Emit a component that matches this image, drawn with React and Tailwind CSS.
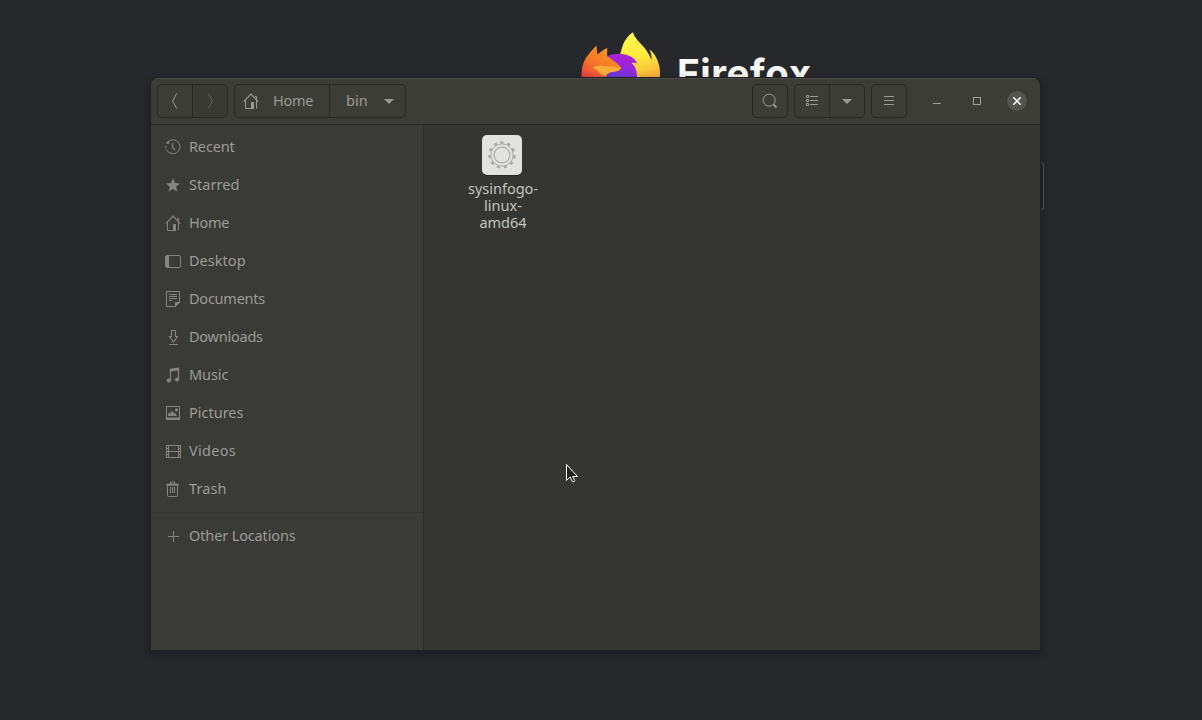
import React from "react";

const ICONS = {
  recent: (
    <>
      <path d="M2.800 3A7 7 0 1 1 1.500 10.500" />
      <path d="M.700 7v1.800M7.500 4v4.500l2.500 2.500" strokeWidth="1.200" />
      <path d="M.500 4.500L3.500 1.500l1 3.500z" fill="currentColor" stroke="none" />
    </>
  ),
  star: <path stroke="none" fill="currentColor" d="M8 1.300l2 4.800 5 .4-3.900 3.200 1.300 5L8 12l-4.400 2.700 1.300-5L1 6.500l5-.4z" />,
  home: (
    <>
      <path d="M.700 8.700L8 1.200l7.300 7.500" strokeWidth="1.200" />
      <path d="M2.500 7.200v8.300h6M13.500 7.200v8.300M13.500 6V3.500h-1.500" />
      <path d="M8 9h3v7H8z" fill="currentColor" stroke="none" />
    </>
  ),
  desktop: (
    <>
      <rect x=".5" y="2.500" width="15" height="12" rx="1.500" />
      <path d="M1 3h3v11H1z" fill="currentColor" stroke="none" />
    </>
  ),
  documents: (
    <>
      <path d="M1.500.5h13v11l-4 4h-9zM4 3.500h8M4 5.500h8M4 7.500h8M4 9.500h3" />
      <path d="M10 11h5l-5 5z" fill="currentColor" stroke="none" />
    </>
  ),
  downloads: <path d="M6.500 1.500h4v6h2L8.500 13l-4-5.500h2zM4 15.500h9" strokeWidth="1.100" />,
  music: (
    <>
      <path d="M5.500 13.500V2.500M13.500 12.500V1" strokeWidth="1.200" />
      <path d="M5 1.800L14 .5v3L5 4.600z" fill="currentColor" stroke="none" />
      <circle cx="3.800" cy="13.600" r="2.100" fill="currentColor" stroke="none" />
      <circle cx="12" cy="12.600" r="2.100" fill="currentColor" stroke="none" />
    </>
  ),
  pictures: (
    <>
      <path d="M1.500 1.500h13v13h-13z" />
      <path d="M1 12.500h14V15H1zM3 11V9.500L4.500 7l1 1.600L7 5.500l2 3 1-.8 2 3.300z" fill="currentColor" stroke="none" />
      <circle cx="11.500" cy="4.800" r="1.600" fill="currentColor" stroke="none" />
    </>
  ),
  videos: (
    <>
      <path d="M1.500 2v13M15.500 2v13M3.500 2v13M13.500 2v13M3.500 2.500h10M3.500 8.500h10M3.500 14.500h10" />
      <path d="M1 2.500h2.500M1 5.500h2.500M1 8.500h2.500M1 11.500h2.500M1 14.500h2.500M13.500 2.500H16M13.500 5.500H16M13.500 8.500H16M13.500 11.500H16M13.500 14.500H16" />
    </>
  ),
  trash: (
    <>
      <path d="M2.500 5v9.500q0 1 1 1h8q1 0 1-1V5M5.500 6v6M7.500 6v6M9.500 6v6M5.500 3V1h4v2" />
      <path d="M1 4.800V3.800Q2 2.500 3.500 2.500h8q1.500 0 2.500 1.300v1z" fill="currentColor" stroke="none" />
    </>
  ),
  plus: <path d="M8.500 3v11M3 8.500h11" />,
  back: <path d="M9.700 .5L5.700 8l4 7.500" />,
  forward: <path d="M6.300 .5L10.300 8l-4 7.500" />,
  down: <path d="M3 6h10l-5 5z" fill="currentColor" stroke="none" />,
  search: (
    <>
      <circle cx="7.200" cy="7.200" r="6" />
      <path d="M11.500 11.500l3 3" strokeWidth="1.800" />
    </>
  ),
  list: <path d="M2.500 2.500h2v2h-2zM2.500 6.500h2v2h-2zM2.500 10.500h2v2h-2zM6 3.500h8M6 7.500h8M6 11.500h8" />,
  menu: <path d="M3 3.500h10M3 7.500h10M3 11.500h10" />,
};

function Icon({ name }) {
  return (
    <svg viewBox="0 0 16 16" className="size-4 shrink-0 overflow-visible" fill="none" stroke="currentColor" strokeWidth="1">
      {ICONS[name]}
    </svg>
  );
}

const PLACES = [
  ["recent", "Recent", "tracking-[-0.15px]"],
  ["star", "Starred", "tracking-[0.05px]"],
  ["home", "Home", "tracking-[-0.25px]"],
  ["desktop", "Desktop", "tracking-[0.03px]"],
  ["documents", "Documents", "tracking-[-0.24px]"],
  ["downloads", "Downloads", "tracking-[-0.24px]"],
  ["music", "Music", "tracking-[-0.1px]"],
  ["pictures", "Pictures", ""],
  ["videos", "Videos", "tracking-[0.3px]"],
  ["trash", "Trash", "tracking-[0.1px]"],
];

function Place({ icon, label, tracking }) {
  return (
    <li className="flex h-[38px] items-center gap-2 pb-px pl-[14px] text-[#85857f]">
      <Icon name={icon} />
      <span className={"text-[#9c9c98] " + tracking}>{label}</span>
    </li>
  );
}

function FirefoxLogo() {
  return (
    <svg viewBox="0 0 80 80" className="h-20 w-20 shrink-0">
      <defs>
        <linearGradient id="flame" gradientUnits="userSpaceOnUse" x1="50" y1="0" x2="66" y2="58">
          <stop offset="0" stopColor="#fff651" />
          <stop offset=".4" stopColor="#ffec40" />
          <stop offset=".7" stopColor="#f9c43b" />
          <stop offset="1" stopColor="#f58a35" />
        </linearGradient>
        <linearGradient id="fox" gradientUnits="userSpaceOnUse" x1="24" y1="18" x2="4" y2="50">
          <stop offset="0" stopColor="#f79322" />
          <stop offset=".5" stopColor="#f5702a" />
          <stop offset="1" stopColor="#e5344a" />
        </linearGradient>
        <linearGradient id="globe" gradientUnits="userSpaceOnUse" x1="42" y1="24" x2="34" y2="50">
          <stop offset="0" stopColor="#ac20d6" />
          <stop offset=".45" stopColor="#9029dc" />
          <stop offset="1" stopColor="#5b45dc" />
        </linearGradient>
      </defs>
      <path fill="url(#flame)" d="M52 .3c1.500 6 7 10 11 15 3 4 6 8 7.500 13 .3-4-.5-8-2.200-11 5 3.500 8 9.500 9.500 15 1 3 1.200 7 1.200 10 0 20-16 37-37 37L39 24c.3-3 1.300-6 2.500-9.500C43 9 47 3.500 52 .3z" />
      <path fill="url(#globe)" d="M25 25c5-3 13-4 19-2.500 5 1 8 3 10 5.500l2.500 3.500c-2-.8-4-.8-6-.5 3 2 5 6 5.500 12 0 8-6 16-14 16S22 51 22 42z" />
      <path fill="url(#fox)" d="M.5 43c0-9 3-16 7-20.500 3-4 5.500-6.500 8-9 .2 3 .5 6 .8 9 3-2.500 6-5 10-6.500-.3 3-.3 6 .2 8.500 3 2 6 4 9 6.500 2.500 2 4.500 3.500 4.500 5-1 3-5 3.500-9 4-3 .5-5 2-6 5-2 8 6 22 12 22v10C15 79 .5 65 .5 43z" />
      <path fill="#f8ad38" d="M11.500 35.500c3-1.500 7-2.500 11-1.500 4 .6 6 0 9 .6 3 .4 6 1 8.500 1.400-1 3-5 3.500-9 4-3 .4-5 1.500-6 3.500-3 .2-6-.5-7-3.500-2-2-4-3-6.500-4.500z" />
    </svg>
  );
}

export default function App() {
  return (
    <div className="relative h-[720px] w-[1202px] overflow-hidden bg-[#27282c] [font-family:'Noto_Sans',sans-serif] text-[14.500px]">
      <div className="absolute left-[581px] top-8 flex gap-4">
        <FirefoxLogo />
        <span className="pt-[17px] [font-family:Inter,sans-serif] text-[38.500px] font-bold leading-[48px] tracking-[0.6px] text-[#f8f8f5]">Firefox</span>
      </div>
      <div className="absolute left-[1030px] top-[162px] h-12 w-[14px] rounded-[3px] border border-[#56575a]" />

      <div className="absolute left-[151px] top-[78px] flex h-[572px] w-[889px] flex-col overflow-hidden rounded-t-lg bg-[#353631] shadow-[0_0_0_1px_#202120,0_3px_9px_1px_rgba(0,0,0,0.35)]">
        <header className="flex h-[47px] shrink-0 items-center border-b border-t border-b-[#242522] border-t-[#4b4c47] bg-[#3d3d38] pb-px pl-1.5 pr-[13px] text-[#999995]">
          <div className="flex h-[34px] w-[71px] rounded-[5px] border border-[#272824]">
            <button className="flex w-[35px] items-center justify-center border-r border-[#272824]"><Icon name="back" /></button>
            <button className="flex flex-1 items-center justify-center rounded-r bg-[#393934] text-[#65665f]"><Icon name="forward" /></button>
          </div>
          <div className="ml-1.5 flex h-[34px] w-[172px] rounded-[5px] border border-[#272824]">
            <button className="flex w-[95px] items-center gap-[14px] border-r border-[#272824] pl-2">
              <Icon name="home" />
              <span className="tracking-[-0.25px]">Home</span>
            </button>
            <button className="flex flex-1 items-center justify-between pl-4 pr-2">
              <span>bin</span>
              <Icon name="down" />
            </button>
          </div>
          <button className="ml-auto flex h-[34px] w-9 items-center justify-center rounded-[5px] border border-[#272824]"><Icon name="search" /></button>
          <div className="ml-1.5 flex h-[34px] w-[71px] rounded-[5px] border border-[#272824]">
            <button className="flex w-[35px] items-center justify-center border-r border-[#272824]"><Icon name="list" /></button>
            <button className="flex flex-1 items-center justify-center"><Icon name="down" /></button>
          </div>
          <button className="ml-1.5 flex h-[34px] w-9 items-center justify-center rounded-[5px] border border-[#272824]"><Icon name="menu" /></button>
          <div className="ml-[26px] flex items-center">
            <span className="mt-1 h-px w-2 bg-[#a0a09b]" />
            <span className="ml-8 size-2 border border-[#a0a09b]" />
            <span className="ml-[26px] flex size-5 items-center justify-center rounded-full bg-[#555550]">
              <svg viewBox="0 0 8 8" className="size-2" stroke="#fff" strokeWidth="1.500"><path d="M.3.3l7.400 7.400M7.700.3L.3 7.700" /></svg>
            </span>
          </div>
        </header>
        <div className="flex flex-1">
          <aside className="w-[273px] shrink-0 border-r border-[#2c2d29] bg-[#3a3a36] pt-[3px]">
            <ul>
              {PLACES.map(([icon, label, tracking]) => <Place key={label} icon={icon} label={label} tracking={tracking} />)}
            </ul>
            <ul className="mt-1 border-t border-[#343530] pt-1">
              <Place icon="plus" label="Other Locations" tracking="tracking-[-0.13px]" />
            </ul>
          </aside>
          <main className="pl-[34px] pt-2.5">
            <figure className="flex w-[90px] flex-col items-center">
              <svg viewBox="0 0 40 40" className="mr-0.5 size-10 overflow-visible">
                <rect y="1" width="40" height="40" rx="5" fill="#272824" />
                <rect width="40" height="40" rx="5" fill="#e2e2df" />
                <g fill="none" stroke="#a9a9a6">
                  <circle cx="20" cy="20" r="12.500" strokeWidth="2.400" strokeDasharray="3.200 3.940" transform="rotate(-98 20 20)" />
                  <circle cx="20" cy="20" r="11.200" strokeWidth="1" />
                  <circle cx="20" cy="20" r="7.900" strokeWidth="1.100" />
                </g>
              </svg>
              <figcaption className="pt-[5px] text-center leading-[17px] text-[#c3c3bf]">sysinfogo-<br />linux-<br />amd64</figcaption>
            </figure>
          </main>
        </div>
      </div>

      <svg viewBox="0 0 12 20" className="absolute left-[566px] top-[463px] h-5 w-3" fill="#20211e" stroke="#fff" strokeWidth="1">
        <path d="M.500 1.500v16l3.600-3.600 2.300 4.800q2 .5 2.300-1l-2-4.200h4.800z" />
      </svg>
    </div>
  );
}
